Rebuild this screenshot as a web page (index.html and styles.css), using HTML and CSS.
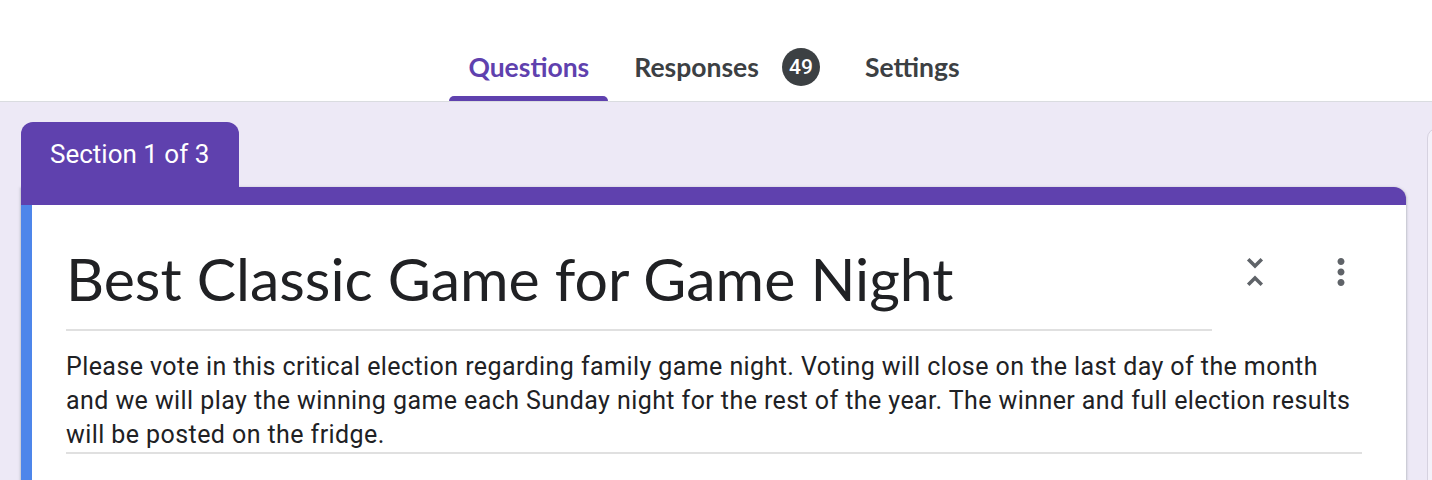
FILE: index.html
```html
<!DOCTYPE html>
<html>
<head>
    <title>Best Classic Game for Game Night</title>
    <link rel="stylesheet" href="styles.css">
</head>
<body>
    <header class="topbar">
        <nav class="tabs">
            <a class="tab active" href="#">Questions</a>
            <a class="tab" href="#">Responses <span class="badge">49</span></a>
            <a class="tab" href="#">Settings</a>
        </nav>
    </header>

    <main class="editor">
        <div class="form-column">
            <div class="section-tab">Section 1 of 3</div>
            <div class="card">
                <div class="card-body">
                    <div class="title-row">
                        <h1 class="form-title">Best Classic Game for Game Night</h1>
                        <button class="icon-btn" title="Collapse section">
                            <svg viewBox="0 0 24 24" width="42" height="42"><path d="M7.41 18.59L8.83 20 12 16.83 15.17 20l1.41-1.41L12 14l-4.59 4.59zm9.18-13.18L15.17 4 12 7.17 8.83 4 7.41 5.41 12 10l4.59-4.59z"/></svg>
                        </button>
                        <button class="icon-btn" title="More options">
                            <svg viewBox="0 0 24 24" width="42" height="42"><path d="M12 8c1.1 0 2-.9 2-2s-.9-2-2-2-2 .9-2 2 .9 2 2 2zm0 2c-1.1 0-2 .9-2 2s.9 2 2 2 2-.9 2-2-.9-2-2-2zm0 6c-1.1 0-2 .9-2 2s.9 2 2 2 2-.9 2-2-.9-2-2-2z"/></svg>
                        </button>
                    </div>
                    <p class="form-desc">Please vote in this critical election regarding family game night. Voting will close on the last day of the month and we will play the winning game each Sunday night for the rest of the year. The winner and full election results will be posted on the fridge.</p>
                </div>
            </div>
        </div>
        <aside class="side-toolbar"></aside>
    </main>
</body>
</html>
```

FILE: styles.css
```css
body { margin: 0; background: #ede9f6; font-family: Roboto, Arial, sans-serif; color: #202124; overflow: hidden; height: 480px; }

.topbar { background: #fff; height: 101px; border-bottom: 1px solid #dadce0; display: flex; justify-content: center; align-items: flex-end; }
.tabs { display: flex; gap: 7px; margin-right: 4px; }
.tab { display: flex; align-items: center; height: 101px; box-sizing: border-box; padding: 32px 19px 0; font-family: Lato, "Open Sans", sans-serif; font-weight: 700; font-size: 26.5px; line-height: 30px; color: #3c4043; text-decoration: none; position: relative; }
.tab.active { color: #5f41ae; }
.tab.active::after { content: ""; position: absolute; left: 0; right: 0; bottom: 0; height: 5px; background: #5f41ae; border-radius: 5px 5px 0 0; }
.badge { display: inline-flex; align-items: center; justify-content: center; width: 38px; height: 38px; margin-left: 23px; border-radius: 50%; background: #3c4043; color: #fff; font-family: Roboto, sans-serif; font-weight: 500; font-size: 21px; }

.editor { display: flex; gap: 21px; padding: 20px 0 0 21px; }
.form-column { width: 1385px; flex: none; }
.section-tab { display: inline-block; background: #5f41ae; color: #fff; font-size: 26px; line-height: 65px; height: 65px; padding: 0 30px 0 29px; border-radius: 12px 12px 0 0; }
.card { background: #fff; border-top: 18px solid #5f41ae; border-radius: 0 12px 0 0; box-shadow: 0 1px 2px rgba(60,64,67,.3), 0 1px 3px 1px rgba(60,64,67,.15); }
.card-body { border-left: 11px solid #4e86ea; padding: 31px 44px 30px 34px; }

.title-row { display: flex; align-items: flex-start; }
.form-title { flex: 1; margin: 0; padding-bottom: 7px; font-family: Lato, "Open Sans", sans-serif; font-weight: 400; font-size: 59px; line-height: 86px; border-bottom: 2px solid #e0e0e0; }
.icon-btn { border: none; background: none; padding: 0; margin: 15px 0 0 22px; width: 42px; height: 42px; fill: #5f6368; cursor: pointer; }
.icon-btn + .icon-btn { margin-left: 44px; }

.form-desc { margin: 19px 0 0; font-size: 25px; line-height: 34px; letter-spacing: 0.42px; border-bottom: 2px solid #e0e0e0; padding-bottom: 0; }

.side-toolbar { flex: none; width: 80px; height: 400px; margin-top: 6px; background: #f4f1fa; border: 1px solid #d6d2e0; border-radius: 10px; }
```
